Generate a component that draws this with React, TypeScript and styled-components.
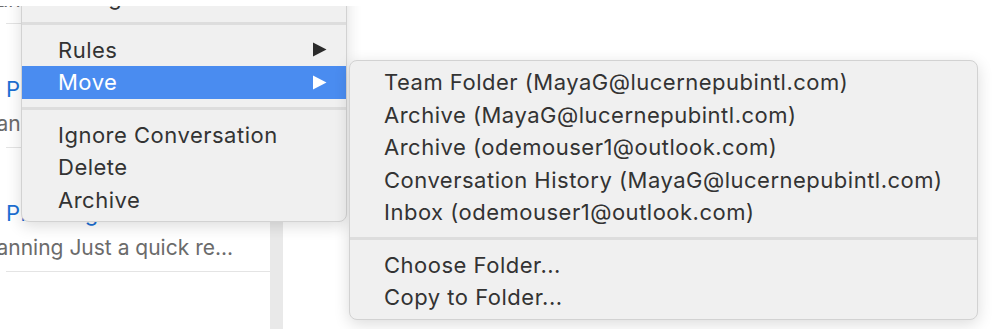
import React from 'react';
import styled, { createGlobalStyle } from 'styled-components';

const GlobalStyle = createGlobalStyle`
  html, body {
    margin: 0;
    padding: 0;
    background: #fff;
  }
  body {
    width: 999px;
    height: 329px;
    overflow: hidden;
    font-family: Inter, "Liberation Sans", Arial, sans-serif;
  }
`;

// the capture starts a few pixels above the app window
const Frame = styled.div`
  width: 999px;
  height: 329px;
  box-sizing: border-box;
  padding-top: 6px;
  background: #fff;
`;

const Screen = styled.div`
  position: relative;
  display: flex;
  height: 100%;
  overflow: hidden;
  background: #fff;
`;

const ListPane = styled.div`
  flex: none;
  width: 294px;
  margin-left: -24px;
  margin-top: -106px;
`;

const MailItem = styled.div`
  height: 124px;
  box-sizing: border-box;
  padding-top: 51px;
  background: linear-gradient(#e4e4e4, #e4e4e4) no-repeat 30px 100% / calc(100% - 30px) 1px;
`;

const SubjectRow = styled.div`
  display: flex;
  align-items: center;
  justify-content: space-between;
  height: 28px;
  padding: 0 58px 0 30px;
`;

const Subject = styled.span`
  font-size: 22px;
  letter-spacing: 0.4px;
  color: #1c6fd4;
  white-space: nowrap;
`;

const Date = styled.span`
  font-size: 18px;
  color: #777;
`;

const Preview = styled.div`
  margin-top: 8px;
  height: 26px;
  line-height: 26px;
  padding-left: 2px;
  font-size: 21px;
  color: #6b6b6b;
  white-space: nowrap;
`;

const Scrollbar = styled.div`
  flex: none;
  width: 13px;
  background: #e9e9e9;
`;

const Rest = styled.div`
  flex: 1;
  background: #fff;
`;

const Menu = styled.div<{ $left: number; $top: number; $width: number; $padTop: number; $padBottom: number }>`
  position: absolute;
  left: ${p => p.$left}px;
  top: ${p => p.$top}px;
  width: ${p => p.$width}px;
  box-sizing: border-box;
  padding: ${p => p.$padTop}px 0 ${p => p.$padBottom}px;
  background: #f0f0f0;
  border: 1px solid #d2d2d2;
  border-radius: 8px;
  box-shadow: 0 4px 16px rgba(0, 0, 0, 0.14);
`;

const Row = styled.div<{ $active?: boolean; $indent: number }>`
  display: flex;
  align-items: center;
  justify-content: space-between;
  height: 32.5px;
  padding: 0 19px 0 ${p => p.$indent}px;
  font-size: 22px;
  letter-spacing: 0.5px;
  color: ${p => (p.$active ? '#fff' : '#333')};
  background: ${p => (p.$active ? '#4a8cf0' : 'transparent')};
  white-space: nowrap;
`;

const Separator = styled.div`
  height: 3px;
  margin: 8.5px 0;
  background: #dddddd;
`;

const Arrow = ({ color }: { color: string }) => (
  <svg width="15" height="15" viewBox="0 0 15 15">
    <polygon points="1,0.5 14.5,7.5 1,14.5" fill={color} />
  </svg>
);

const mail = [
  { subject: 'Planning', preview: 'Planning Just a quick re...', date: '10/1/21' },
  { subject: 'Planning', preview: 'Planning Just a quick re...', date: '10/1/21' },
  { subject: 'Planning', preview: 'Planning Just a quick re...', date: '9/28/21' },
];

const folders = [
  'Team Folder (MayaG@lucernepubintl.com)',
  'Archive (MayaG@lucernepubintl.com)',
  'Archive (odemouser1@outlook.com)',
  'Conversation History (MayaG@lucernepubintl.com)',
  'Inbox (odemouser1@outlook.com)',
];

export default function App() {
  return (
    <>
      <GlobalStyle />
      <Frame>
        <Screen>
          <ListPane>
            {mail.map((m, i) => (
              <MailItem key={i}>
                <SubjectRow>
                  <Subject>{m.subject}</Subject>
                  <Date>{m.date}</Date>
                </SubjectRow>
                <Preview>{m.preview}</Preview>
              </MailItem>
            ))}
          </ListPane>
          <Scrollbar />
          <Rest />

          <Menu $left={21} $top={-34} $width={326} $padTop={8} $padBottom={5}>
            <Row $indent={36}>
              Categorize
              <Arrow color="#2b2b2b" />
            </Row>
            <Separator />
            <Row $indent={36}>
              Rules
              <Arrow color="#2b2b2b" />
            </Row>
            <Row $indent={36} $active>
              Move
              <Arrow color="#fff" />
            </Row>
            <Separator />
            <Row $indent={36}>Ignore Conversation</Row>
            <Row $indent={36}>Delete</Row>
            <Row $indent={36}>Archive</Row>
          </Menu>

          <Menu $left={349} $top={54} $width={629} $padTop={5} $padBottom={5}>
            {folders.map(f => (
              <Row key={f} $indent={34}>
                {f}
              </Row>
            ))}
            <Separator />
            <Row $indent={34}>Choose Folder...</Row>
            <Row $indent={34}>Copy to Folder...</Row>
          </Menu>
        </Screen>
      </Frame>
    </>
  );
}
